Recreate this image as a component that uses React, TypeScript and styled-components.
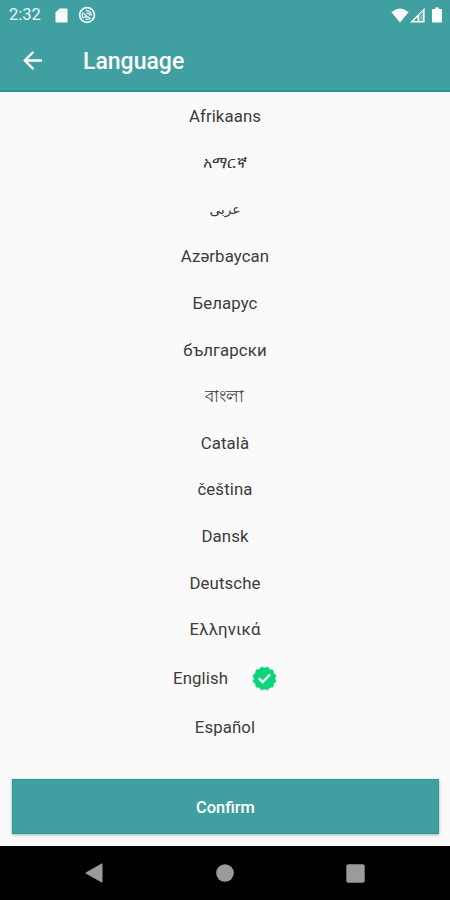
import React from 'react';
import styled, { createGlobalStyle } from 'styled-components';

const GlobalStyle = createGlobalStyle`
  * { box-sizing: border-box; }
  body { margin: 0; background: #fafafa; }
`;

const Screen = styled.div`
  width: 450px;
  height: 900px;
  display: flex;
  flex-direction: column;
  overflow: hidden;
  background: #fafafa;
  font-family: Roboto, 'Noto Sans', 'DejaVu Sans', sans-serif;
`;

const Header = styled.header`
  flex: none;
  height: 92px;
  background: #40a0a1;
  border-bottom: 2px solid #229594;
  color: #fff;
`;

const StatusBar = styled.div`
  height: 30px;
  display: flex;
  align-items: center;
  padding: 0 8px 0 9px;
`;

const Clock = styled.span`
  width: 46px;
  font-size: 16.5px;
  line-height: 30px;
  color: #e9f8f7;
`;

const StatusIcons = styled.div<{ $gap: number; $end?: boolean }>`
  display: flex;
  align-items: center;
  gap: ${({ $gap }) => $gap}px;
  margin-left: ${({ $end }) => ($end ? 'auto' : '0')};
  svg { display: block; }
`;

const BatteryStatus = styled.span`
  display: flex;
  margin-left: 6px;
`;

const Toolbar = styled.div`
  height: 60px;
  display: flex;
  align-items: center;
  padding-left: 23px;
`;

const BackButton = styled.button`
  width: 60px;
  padding: 0;
  border: 0;
  background: none;
  text-align: left;
  svg { display: block; }
`;

const Title = styled.h1`
  margin: 3px 0 0;
  font-size: 23px;
  font-weight: 500;
  line-height: 30px;
`;

const LanguageList = styled.ul`
  flex: none;
  height: 675px;
  margin: 0;
  padding: 1px 0 0;
  list-style: none;
  overflow: hidden;
`;

const LanguageRow = styled.li<{ $selected?: boolean }>`
  height: ${({ $selected }) => ($selected ? 50.8 : 46.65)}px;
  display: flex;
  align-items: center;
  justify-content: center;
  gap: 24px;
  color: #3c3c3c;
  svg { display: block; }
`;

const LanguageName = styled.span<{ $size: number; $raise: number }>`
  font-size: ${({ $size }) => $size}px;
  line-height: 24px;
  padding-bottom: ${({ $raise }) => $raise}px;
  letter-spacing: 0.1px;
  white-space: nowrap;
`;

const Footer = styled.div`
  flex: none;
  height: 79px;
  padding: 12px 12px 0;
`;

const ConfirmButton = styled.button`
  display: block;
  width: 427px;
  height: 55px;
  padding: 2px 0 0;
  border: 1px solid #2c9796;
  background: #40a0a1;
  box-shadow: 0 1px 3px rgba(0, 0, 0, 0.3);
  color: #fff;
  font: 500 16.4px Roboto, sans-serif;
`;

const NavigationBar = styled.nav`
  flex: none;
  height: 54px;
  display: flex;
  align-items: center;
  justify-content: space-between;
  padding: 0 85px;
  background: #000;
  svg { display: block; }
`;

const SdCardIcon = () => (
  <svg width="13" height="15" viewBox="0 0 13 15">
    <path d="M4.5 0.5H11.5Q12.5 0.5 12.5 1.5V13.5Q12.5 14.5 11.5 14.5H1.5Q.5 14.5 .5 13.5V4.5Z" fill="#fff" />
    <path d="M5 3.2v1.6M7.4 2.8v2M9.8 2.8v2" stroke="#b5dcdb" strokeWidth=".8" />
  </svg>
);

const SyncBlockedIcon = () => (
  <svg width="18" height="18" viewBox="0 0 18 18" fill="none" stroke="#eefafa">
    <circle cx="9" cy="9" r="7.4" strokeWidth="1.8" />
    <path d="M5.6 12.2A4.6 4.6 0 0 1 5.4 6.2M7.6 4.8A4.6 4.6 0 0 1 13.4 9.4M11.4 12.9A4.6 4.6 0 0 1 7.6 13.2" strokeWidth="1.3" />
    <path d="M5.6 7.4 9 10.2 12.8 12.8M8.4 7.2l2.6.3 1 2.2M6.3 10.5l2.6 1.3" strokeWidth="1.3" />
  </svg>
);

const WifiIcon = () => (
  <svg width="18" height="15" viewBox="0 0 18 15">
    <path d="M.4 4.2Q9-3 17.6 4.2L9 14.6Z" fill="#fff" />
  </svg>
);

const SignalIcon = () => (
  <svg width="15" height="15" viewBox="0 0 15 15">
    <path d="M1.8 13.8 13.8 1.8V13.8Z" fill="none" stroke="#fff" strokeWidth="1.6" />
    <path d="M8.4 7.2V13.5" stroke="#fff" strokeWidth="1.8" />
    <path d="M9.3 6.5 13 2.8V13H9.3Z" fill="#73bbb9" />
  </svg>
);

const BatteryIcon = () => (
  <svg width="10" height="16" viewBox="0 0 10 16">
    <path d="M3 .5H7V2H9Q10 2 10 3V14.5Q10 15.5 9 15.5H1Q0 15.5 0 14.5V3Q0 2 1 2H3Z" fill="#fff" />
  </svg>
);

const ArrowIcon = () => (
  <svg width="20" height="19" viewBox="0 0 20 19" fill="none" stroke="#fff" strokeWidth="2.3">
    <path d="M19 9.5H2M10.4.9 1.8 9.5l8.6 8.6" />
  </svg>
);

const badgePoints = Array.from({ length: 24 }, (_, i) => {
  const radius = i % 2 === 0 ? 12 : 10.4;
  const angle = (i * Math.PI) / 12 + Math.PI / 12;
  return `${12.5 + radius * Math.sin(angle)},${12.5 - radius * Math.cos(angle)}`;
}).join(' ');

const VerifiedIcon = () => (
  <svg width="25" height="25" viewBox="0 0 25 25">
    <polygon points={badgePoints} fill="#0bd47b" stroke="#0bd47b" strokeWidth=".6" strokeLinejoin="round" />
    <path d="M6.9 12.4 10.7 16.1 18 8.5" fill="none" stroke="#fff" strokeWidth="2.4" />
  </svg>
);

interface Language {
  name: string;
  size?: number;
  raise?: number;
  selected?: boolean;
}

const languages: Language[] = [
  { name: 'Afrikaans' },
  { name: 'አማርኛ', size: 15.8 },
  { name: 'عربى', size: 13.8, raise: 2 },
  { name: 'Azərbaycan' },
  { name: 'Беларус' },
  { name: 'български' },
  { name: 'বাংলা' },
  { name: 'Català' },
  { name: 'čeština', raise: -1 },
  { name: 'Dansk' },
  { name: 'Deutsche' },
  { name: 'Ελληνικά' },
  { name: 'English', selected: true },
  { name: 'Español' },
  { name: 'فارسی', size: 12, raise: 3 },
];

export default function App() {
  return (
    <Screen>
      <GlobalStyle />
      <Header>
        <StatusBar>
          <Clock>2:32</Clock>
          <StatusIcons $gap={10}>
            <SdCardIcon />
            <SyncBlockedIcon />
          </StatusIcons>
          <StatusIcons $gap={1} $end>
            <WifiIcon />
            <SignalIcon />
            <BatteryStatus>
              <BatteryIcon />
            </BatteryStatus>
          </StatusIcons>
        </StatusBar>
        <Toolbar>
          <BackButton aria-label="Back">
            <ArrowIcon />
          </BackButton>
          <Title>Language</Title>
        </Toolbar>
      </Header>
      <LanguageList>
        {languages.map(({ name, size = 16.8, raise = 0, selected }) => (
          <LanguageRow key={name} $selected={selected}>
            <LanguageName $size={size} $raise={raise}>{name}</LanguageName>
            {selected && <VerifiedIcon />}
          </LanguageRow>
        ))}
      </LanguageList>
      <Footer>
        <ConfirmButton>Confirm</ConfirmButton>
      </Footer>
      <NavigationBar>
        <svg width="18" height="20" viewBox="0 0 18 20">
          <path d="M17 .8V19.2L.8 10Z" fill="#9b9b9b" stroke="#9b9b9b" strokeLinejoin="round" />
        </svg>
        <svg width="18" height="18" viewBox="0 0 18 18">
          <circle cx="9" cy="9" r="8.8" fill="#9b9b9b" />
        </svg>
        <svg width="19" height="19" viewBox="0 0 19 19">
          <rect x=".3" y=".3" width="18.4" height="18.4" rx="2" fill="#9b9b9b" />
        </svg>
      </NavigationBar>
    </Screen>
  );
}
